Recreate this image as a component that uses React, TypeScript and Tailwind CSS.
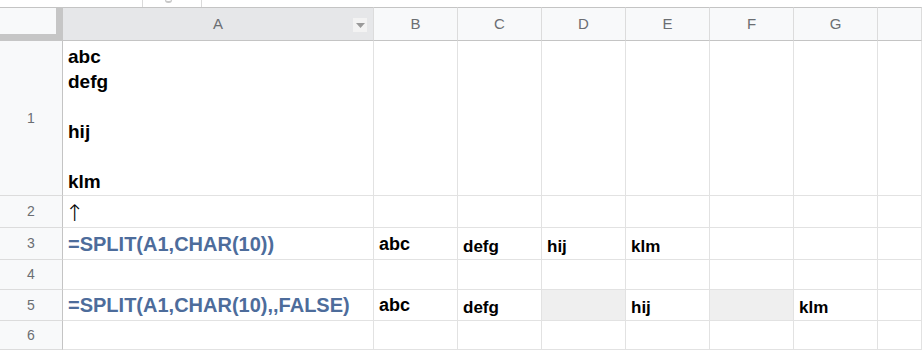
import React from 'react';

type CellSpec = {
  text?: React.ReactNode;
  shade?: boolean;
};

const COLUMNS = ['A', 'B', 'C', 'D', 'E', 'F', 'G', ''];

const FORMULA = 'font-bold text-[20px] leading-[23px] text-[#4d6c9b]';
const RESULT = 'font-bold text-[17px] leading-[20px] text-black';

// one entry per row: row height, then cells A..H
const ROWS: { n: number; h: string; cells: CellSpec[] }[] = [
  {
    n: 1,
    h: 'h-[155px]',
    cells: [
      {
        text: (
          <div className="font-bold text-[19px] leading-[25px] text-black pb-[1px]">
            <div>abc</div>
            <div>defg</div>
            <div>&nbsp;</div>
            <div>hij</div>
            <div>&nbsp;</div>
            <div>klm</div>
          </div>
        ),
      },
      {}, {}, {}, {}, {}, {}, {},
    ],
  },
  {
    n: 2,
    h: 'h-[32px]',
    cells: [
      {
        text: (
          <span className="font-['DejaVu_Sans',sans-serif] font-light text-[23px] leading-[26px] text-black pb-[1px] -ml-[3px]">
            ↑
          </span>
        ),
      },
      {}, {}, {}, {}, {}, {}, {},
    ],
  },
  {
    n: 3,
    h: 'h-[32px]',
    cells: [
      { text: <span className={`${FORMULA} pb-[3px]`}>=SPLIT(A1,CHAR(10))</span> },
      { text: <span className="font-bold text-[18px] leading-[20px] text-black pb-[5px]">abc</span> },
      { text: <span className={`${RESULT} pb-[2px]`}>defg</span> },
      { text: <span className={`${RESULT} pb-[2px]`}>hij</span> },
      { text: <span className={`${RESULT} pb-[2px]`}>klm</span> },
      {}, {}, {},
    ],
  },
  { n: 4, h: 'h-[30px]', cells: [{}, {}, {}, {}, {}, {}, {}, {}] },
  {
    n: 5,
    h: 'h-[31px]',
    cells: [
      { text: <span className={`${FORMULA} pb-[3px]`}>=SPLIT(A1,CHAR(10),,FALSE)</span> },
      { text: <span className="font-bold text-[18px] leading-[20px] text-black pb-[5px]">abc</span> },
      { text: <span className={`${RESULT} pb-[2px]`}>defg</span> },
      { shade: true },
      { text: <span className={`${RESULT} pb-[2px]`}>hij</span> },
      { shade: true },
      { text: <span className={`${RESULT} pb-[2px]`}>klm</span> },
      {},
    ],
  },
  { n: 6, h: 'h-[29px]', cells: [{}, {}, {}, {}, {}, {}, {}, {}] },
];

function ColumnHeader({ letter, active }: { letter: string; active?: boolean }) {
  return (
    <div
      className={`relative h-[34px] border-t border-b border-r border-t-[#c4c4c4] border-b-[#c4c4c4] border-r-[#dcdcdc] flex items-center justify-center text-[15px] text-[#6b6e72] ${
        active ? 'bg-[#e6e7e9]' : 'bg-[#f8f9fa]'
      }`}
    >
      {letter}
      {active && (
        <div className="absolute right-[6px] top-[10px] w-[14px] h-[14px] bg-[#f3f3f3] flex items-center justify-center">
          <svg width="9" height="5" viewBox="0 0 9 5">
            <path d="M0 0 H9 L4.5 5 Z" fill="#9a9a9a" />
          </svg>
        </div>
      )}
    </div>
  );
}

export default function App() {
  return (
    <div className="w-[922px] h-[351px] overflow-hidden bg-white font-['Liberation_Sans',Arial,sans-serif]">
      {/* strip of the toolbar above the grid */}
      <div className="h-[7px] relative">
        <div className="absolute left-[142px] top-0 w-[60px] h-[7px] border-l border-r border-[#dadada] flex justify-center">
          <div className="w-[7px] h-[3px] rounded-b-full border-b-2 border-l border-r border-[#c8c8c8] ml-[-8px]" />
        </div>
      </div>

      <div className="grid grid-cols-[63px_311px_84px_84px_84px_84px_84px_84px_1fr]">
        {/* corner */}
        <div className="h-[34px] bg-[#f8f9fa] border-t border-t-[#c4c4c4] border-r-[7px] border-b-[7px] border-r-[#c6c6c6] border-b-[#c6c6c6]" />
        {COLUMNS.map((c, i) => (
          <ColumnHeader key={i} letter={c} active={c === 'A'} />
        ))}

        {ROWS.map((row) => (
          <React.Fragment key={row.n}>
            <div
              className={`${row.h} bg-[#f8f9fa] border-r border-b border-r-[#c4c4c4] border-b-[#dcdcdc] flex items-center justify-center text-[14px] text-[#6b6e72]`}
            >
              {row.n}
            </div>
            {row.cells.map((cell, i) => (
              <div
                key={i}
                className={`${row.h} border-r border-b border-[#e2e2e2] flex items-end whitespace-nowrap pl-[5px] ${
                  cell.shade ? 'bg-[#efefef]' : 'bg-white'
                }`}
              >
                {cell.text}
              </div>
            ))}
          </React.Fragment>
        ))}
      </div>
    </div>
  );
}
